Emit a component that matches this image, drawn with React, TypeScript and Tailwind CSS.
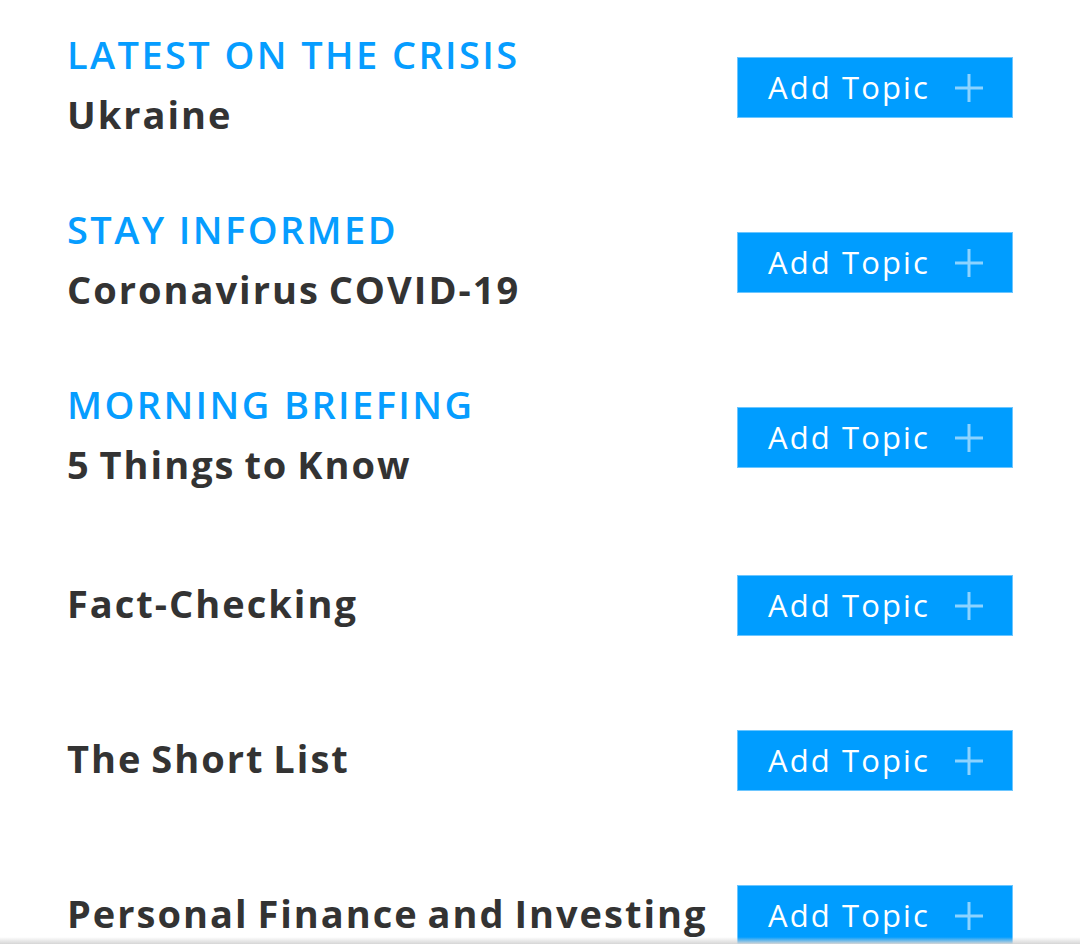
const TOPICS = [
  { label: 'LATEST ON THE CRISIS', title: 'Ukraine' },
  { label: 'STAY INFORMED', title: 'Coronavirus COVID-19' },
  { label: 'MORNING BRIEFING', title: '5 Things to Know' },
  { label: '', title: 'Fact-Checking' },
  { label: '', title: 'The Short List' },
  { label: '', title: 'Personal Finance and Investing' },
];

function AddTopicButton({ shift }: { shift: boolean }) {
  return (
    <button
      className={
        'flex items-center h-[61px] w-[276px] shrink-0 pl-[30px] bg-[#009dff] border border-[#6cc6ff] text-white text-[31px] tracking-[2.1px] ' +
        (shift ? 'mt-[6px]' : '')
      }
      style={{ fontFamily: '"Open Sans", sans-serif' }}
    >
      <span>Add Topic</span>
      <svg className="ml-[24px]" width="30" height="30" viewBox="0 0 30 30">
        <path d="M15 1v28M1 15h28" stroke="#ffffff" strokeOpacity="0.55" strokeWidth="3" />
      </svg>
    </button>
  );
}

export default function App() {
  return (
    <div className="min-h-screen bg-white px-[67px]" style={{ fontFamily: '"Open Sans", sans-serif' }}>
      {TOPICS.map((t, i) => (
        <div
          key={i}
          className={'flex items-center justify-between ' + (t.label ? 'h-[175px]' : 'h-[155px]')}
        >
          <div className="flex flex-col">
            {t.label && (
              <div className="text-[#069dff] text-[38px] font-semibold leading-[60px] tracking-[2.4px] -mt-[8px]">
                {t.label}
              </div>
            )}
            <div className="text-[#333333] text-[38px] font-bold leading-[60px] tracking-[2px] [word-spacing:-3px]">
              {t.title}
            </div>
          </div>
          <AddTopicButton shift={!t.label} />
        </div>
      ))}
      <div className="fixed left-0 right-0 bottom-0 h-[7px] bg-gradient-to-b from-white/0 to-[#d6d6d6]" />
    </div>
  );
}
